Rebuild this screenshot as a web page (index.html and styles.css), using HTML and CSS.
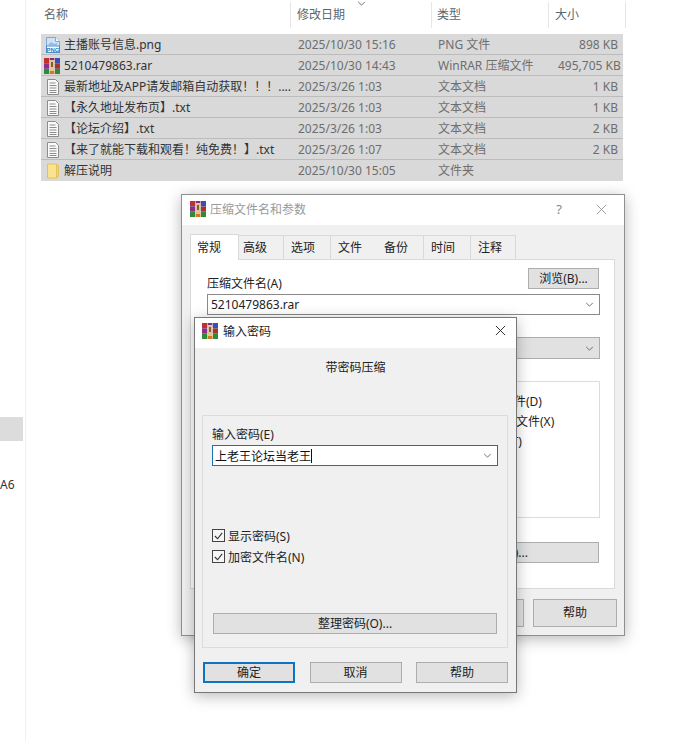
FILE: index.html
```html
<!DOCTYPE html>
<html lang="zh-CN">
<head>
<meta charset="utf-8">
<title>压缩文件名和参数</title>
<link rel="stylesheet" href="styles.css">
</head>
<body>
<svg class="defs" width="0" height="0" aria-hidden="true">
  <defs>
    <symbol id="rar" viewBox="0 0 16 16">
      <rect x="0" y="0" width="16" height="5" fill="#7c2f8e"/>
      <rect x="0" y="0" width="5" height="5" fill="#c0312d"/>
      <rect x="11" y="0" width="5" height="5" fill="#3a4fb0"/>
      <rect x="0" y="5.5" width="16" height="5" fill="#2c3f9e"/>
      <rect x="0" y="5.5" width="5" height="5" fill="#8e2f86"/>
      <rect x="11" y="5.5" width="5" height="5" fill="#a8322c"/>
      <rect x="0" y="11" width="16" height="5" fill="#2f8a3a"/>
      <rect x="5" y="11" width="6" height="5" fill="#d07a24"/>
      <rect x="5.5" y="2" width="5" height="11" fill="#e2c49a"/>
      <rect x="7" y="4" width="2" height="5" fill="#8a5a2a"/>
      <rect x="5" y="0" width="1" height="16" fill="#f0e8d8" opacity=".6"/>
      <rect x="10" y="0" width="1" height="16" fill="#f0e8d8" opacity=".6"/>
    </symbol>
    <symbol id="txt" viewBox="0 0 16 16">
      <path d="M2.500.5h8l3 3v12h-11z" fill="#fafafa" stroke="#8c8c8c"/>
      <path d="M4.500 4h6M4.500 6.500h7M4.500 9h7M4.500 11.500h7M4.500 13.500h7" stroke="#8c8c8c" fill="none"/>
    </symbol>
    <symbol id="chev" viewBox="0 0 10 6">
      <path d="M1 1l4 4 4-4" fill="none" stroke="#555" stroke-width="1"/>
    </symbol>
    <symbol id="close" viewBox="0 0 12 12">
      <path d="M1 1l10 10M11 1L1 11" fill="none" stroke="currentColor" stroke-width="1"/>
    </symbol>
    <symbol id="check" viewBox="0 0 12 12">
      <path d="M2 6l3 3 5-6.500" fill="none" stroke="#333" stroke-width="1.200"/>
    </symbol>
  </defs>
</svg>

<div class="desktop">
  <aside class="sidebar">
    <div class="side-block"></div>
    <div class="side-label">A6</div>
  </aside>

  <main class="explorer">
    <svg class="sort-chevron" width="9" height="5"><use href="#chev"/></svg>
    <div class="head">
      <div class="hcol hname">名称</div>
      <div class="hcol hdate">修改日期</div>
      <div class="hcol htype">类型</div>
      <div class="hcol hsize">大小</div>
    </div>
    <div class="rows">
      <div class="row">
        <span class="ficon">
          <svg width="16" height="16" viewBox="0 0 16 16"><path d="M1.500.5h9l4 4v11h-13z" fill="#cfe2f5" stroke="#7fa9d2"/><path d="M10.500.5v4h4" fill="#fff" stroke="#7fa9d2"/><path d="M3 8l3-3 3 2 3-1v2H3z" fill="#8fbbe6"/><rect x="1.500" y="9" width="13" height="6.500" fill="#fff" stroke="#4b8ccb"/><text class="png-tag" x="8" y="14.500" text-anchor="middle">PNG</text></svg>
        </span>
        <span class="fname">主播账号信息.png</span><span class="fdate">2025/10/30 15:16</span><span class="ftype">PNG 文件</span><span class="fsize">898 KB</span>
      </div>
      <div class="row">
        <span class="ficon rar-cell"><svg width="16" height="16"><use href="#rar"/></svg></span>
        <span class="fname">5210479863.rar</span><span class="fdate">2025/10/30 14:43</span><span class="ftype">WinRAR 压缩文件</span><span class="fsize">495,705 KB</span>
      </div>
      <div class="row">
        <span class="ficon"><svg width="16" height="16"><use href="#txt"/></svg></span>
        <span class="fname">最新地址及APP请发邮箱自动获取！！！....</span><span class="fdate">2025/3/26 1:03</span><span class="ftype">文本文档</span><span class="fsize">1 KB</span>
      </div>
      <div class="row">
        <span class="ficon"><svg width="16" height="16"><use href="#txt"/></svg></span>
        <span class="fname">【永久地址发布页】.txt</span><span class="fdate">2025/3/26 1:03</span><span class="ftype">文本文档</span><span class="fsize">1 KB</span>
      </div>
      <div class="row">
        <span class="ficon"><svg width="16" height="16"><use href="#txt"/></svg></span>
        <span class="fname">【论坛介绍】.txt</span><span class="fdate">2025/3/26 1:03</span><span class="ftype">文本文档</span><span class="fsize">2 KB</span>
      </div>
      <div class="row">
        <span class="ficon"><svg width="16" height="16"><use href="#txt"/></svg></span>
        <span class="fname">【来了就能下载和观看！纯免费！】.txt</span><span class="fdate">2025/3/26 1:07</span><span class="ftype">文本文档</span><span class="fsize">2 KB</span>
      </div>
      <div class="row">
        <span class="ficon">
          <svg width="16" height="16" viewBox="0 0 16 16"><path d="M2.500 1h9v14h-9z" fill="#fbe38e" stroke="#e2c25e"/><path d="M11.500 1.500l2 1v11l-2 1.500z" fill="#f6d36c" stroke="#e2c25e"/></svg>
        </span>
        <span class="fname">解压说明</span><span class="fdate">2025/10/30 15:05</span><span class="ftype">文件夹</span><span class="fsize"></span>
      </div>
    </div>
  </main>

  <section class="win win-back">
    <header class="bar bar-back">
      <svg class="bar-icon" width="16" height="16"><use href="#rar"/></svg>
      <span class="bar-title muted">压缩文件名和参数</span>
      <span class="help-mark">?</span>
      <svg class="bar-close muted" width="11" height="11"><use href="#close"/></svg>
    </header>
    <div class="tabs">
      <div class="tab tab-on">常规</div>
      <div class="tab t44">高级</div>
      <div class="tab t47">选项</div>
      <div class="tab t47 no-r">文件</div>
      <div class="tab t46">备份</div>
      <div class="tab t47">时间</div>
      <div class="tab t45">注释</div>
    </div>
    <div class="panel">
      <div class="name-row">
        <label class="name-label">压缩文件名(A)</label>
        <button class="btn browse">浏览(B)...</button>
      </div>
      <div class="combo combo-white">
        <span>5210479863.rar</span>
        <svg width="9" height="5"><use href="#chev"/></svg>
      </div>
      <div class="combo combo-grey">
        <svg width="9" height="5"><use href="#chev"/></svg>
      </div>
      <div class="opts">
        <div class="opt o1">压缩后删除文件(D)</div>
        <div class="opt o2">创建固实压缩文件(X)</div>
        <div class="opt o3">添加恢复记录(T)</div>
      </div>
      <button class="btn wide-back">设置(C)...</button>
    </div>
    <div class="back-foot">
      <button class="btn foot-back">取消</button>
      <button class="btn foot-back">帮助</button>
    </div>
  </section>

  <section class="win win-front">
    <header class="bar bar-front">
      <svg class="bar-icon" width="16" height="16"><use href="#rar"/></svg>
      <span class="bar-title">输入密码</span>
      <svg class="bar-close" width="11" height="11"><use href="#close"/></svg>
    </header>
    <div class="front-body">
      <div class="subject">带密码压缩</div>
      <div class="group">
        <label class="pw-label">输入密码(E)</label>
        <div class="combo combo-focus">
          <span class="pw-value">上老王论坛当老王</span><span class="caret"></span>
          <svg width="9" height="5"><use href="#chev"/></svg>
        </div>
        <div class="checks">
          <div class="check"><span class="box"><svg width="12" height="12"><use href="#check"/></svg></span>显示密码(S)</div>
          <div class="check"><span class="box"><svg width="12" height="12"><use href="#check"/></svg></span>加密文件名(N)</div>
        </div>
        <button class="btn organize">整理密码(O)...</button>
      </div>
      <div class="front-foot">
        <button class="btn foot default">确定</button>
        <button class="btn foot">取消</button>
        <button class="btn foot">帮助</button>
      </div>
    </div>
  </section>
</div>
</body>
</html>
```
FILE: styles.css
```css
* { box-sizing: border-box; }
html, body { margin: 0; padding: 0; background: #fff; }
body {
  font-family: "Noto Sans", "Noto Sans CJK SC", sans-serif;
  font-size: 12px;
  color: #222;
  overflow: hidden;
}
.defs { position: absolute; }
.desktop { position: relative; display: flex; width: 682px; height: 741px; overflow: hidden; }

.sidebar { width: 26px; flex: none; border-right: 1px solid #f0f0f0; padding-top: 417px; }
.side-block { width: 23px; height: 24px; background: #dcdcdc; }
.side-label { margin-top: 35px; line-height: 18px; color: #333; }

.explorer { position: relative; flex: none; width: 600px; padding: 2px 0 0 15px; }
.sort-chevron { position: absolute; left: 331px; top: 1px; }
.head { display: flex; height: 26px; width: 585px; color: #5a6670; }
.hcol { border-right: 1px solid #e6e6e6; line-height: 26px; padding-left: 3px; }
.hname { width: 250px; }
.hdate { width: 141px; padding-left: 6px; }
.htype { width: 117px; padding-left: 5px; }
.hsize { width: 77px; padding-left: 6px; }

.rows { margin-top: 6px; width: 582px; }
.row {
  display: flex; align-items: center; height: 21px; padding-top: 1px;
  background: #d9d9d9; border-bottom: 1px solid #bcbcbc; color: #6e6e6e;
  line-height: 19px; white-space: nowrap;
}
.row:last-child { border-bottom-color: transparent; }
.ficon { width: 23px; padding-left: 4px; display: flex; }
.rar-cell { padding-left: 3px; }
.fname { width: 234px; color: #333; }
.fdate { width: 140px; }
.ftype { width: 120px; }
.fsize { width: 60px; text-align: right; }
.png-tag { font: 700 6px "Liberation Sans", sans-serif; fill: #2f7cc4; }

.win { position: absolute; background: #f0f0f0; border: 1px solid #8f8f8f; box-shadow: 0 3px 14px rgba(0,0,0,.28); }
.win-back { left: 181px; top: 194px; width: 444px; height: 442px; }
.win-front { left: 194px; top: 317px; width: 323px; height: 376px; border-color: #777; }

.bar { display: flex; align-items: center; background: #fff; height: 30px; padding: 0 0 2px 7px; }
.bar-back { padding-left: 8px; }
.bar-front { padding-bottom: 5px; }
.bar-title { margin-left: 5px; }
.bar-back .bar-title { margin-left: 4px; }
.bar-front .bar-title { color: #222; }
.muted { color: #999; }
.help-mark { margin-left: auto; margin-right: 34px; color: #888; font-size: 13px; }
.bar-close { flex: none; margin-right: 17px; }
.bar-front .bar-close { margin-left: auto; margin-right: 10px; color: #222; }

.tabs { display: flex; align-items: flex-end; height: 34px; margin-left: 8px; position: relative; z-index: 1; }
.tab {
  height: 24px; line-height: 23px; background: #f0f0f0; padding-left: 7px;
  border: 1px solid #d9d9d9; border-left: 0; border-bottom: 0;
}
.tab-on {
  width: 49px; height: 26px; background: #fff; border-left: 1px solid #d9d9d9;
  margin-bottom: -1px; line-height: 25px; padding-left: 6px;
}
.t44 { width: 45px; padding-left: 4px; }
.t47 { width: 47px; }
.t46 { width: 46px; padding-left: 6px; }
.t45 { width: 45px; }
.no-r { border-right: 0; }

.panel {
  background: #fff; border: 1px solid #d9d9d9; height: 330px; width: 425px;
  margin-left: 8px; padding: 8px 14px 0 16px;
}
.name-row { display: flex; justify-content: space-between; align-items: flex-end; height: 26px; }
.name-label { line-height: 16px; margin-bottom: 2px; }
.btn {
  font: inherit; color: #222; background: #e1e1e1; border: 1px solid #adadad;
  padding: 0; display: block; line-height: 18px; white-space: nowrap;
}
.browse { width: 71px; height: 21px; align-self: flex-start; margin-right: 1px; }

.combo { display: flex; align-items: center; justify-content: space-between; height: 21px; padding: 0 5px 0 3px; border: 1px solid #8a8a8a; background: #fff; }
.combo svg { flex: none; }
.combo-white { width: 393px; }
.combo-grey { width: 393px; height: 22px; margin-top: 22px; background: #e1e1e1; border-color: #adadad; justify-content: flex-end; }
.opts { margin: 22px 0 0 180px; width: 213px; height: 137px; border: 1px solid #dcdcdc; padding: 10px 0 0 30px; white-space: nowrap; }
.opt { line-height: 20px; }
.o1 { margin-left: 24px; }
.o2 { margin-left: 26px; }
.o3 { margin-left: 18px; }
.wide-back { margin: 24px 0 0 193px; width: 199px; height: 21px; text-align: right; padding-right: 70px; }
.back-foot { display: flex; justify-content: flex-end; gap: 9px; margin-top: 10px; padding-right: 7px; }
.foot-back { width: 84px; height: 28px; }

.front-body { height: 344px; padding: 0 8px 0 7px; display: flex; flex-direction: column; }
.subject { text-align: center; height: 67px; line-height: 40px; margin-right: -1px; }
.group { border: 1px solid #dcdcdc; height: 233px; padding: 10px 9px 0 9px; flex: none; display: flex; flex-direction: column; }
.pw-label { line-height: 18px; height: 19px; }
.combo-focus { width: 286px; height: 21px; border-color: #1a73b0; justify-content: flex-start; padding: 0 5px 0 2px; flex: none; }
.pw-value { color: #111; }
.caret { width: 1px; height: 14px; background: #111; }
.combo-focus svg { margin-left: auto; }
.checks { margin-top: 63px; display: flex; flex-direction: column; gap: 8px; }
.check { display: flex; align-items: center; height: 13px; gap: 3px; white-space: nowrap; }
.box { width: 13px; height: 13px; border: 1px solid #444; background: #f6f6f6; display: flex; flex: none; }
.organize { width: 284px; height: 21px; margin: 50px 0 0 1px; flex: none; }
.front-foot { display: flex; justify-content: space-between; margin: 14px 0 0 1px; }
.foot { width: 92px; height: 21px; }
.default { border: 2px solid #0f74bf; line-height: 17px; }
```
